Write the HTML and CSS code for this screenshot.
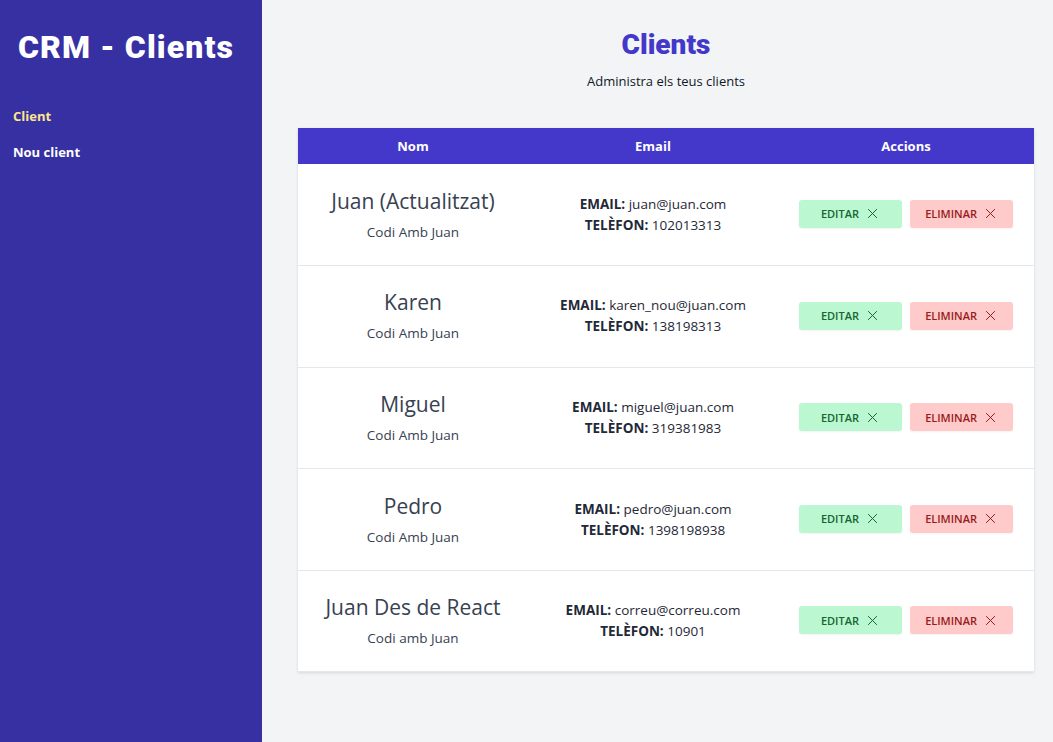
FILE: index.html
```html
<!DOCTYPE html>
<html lang="ca">
<head>
  <meta charset="UTF-8">
  <meta name="viewport" content="width=device-width, initial-scale=1.0">
  <title>CRM - Clients</title>
  <link rel="stylesheet" href="styles.css">
</head>
<body>
  <div class="layout">
    <aside class="sidebar">
      <h2 class="brand">CRM - Clients</h2>
      <nav class="nav">
        <a class="nav-link active" href="#">Client</a>
        <a class="nav-link" href="#">Nou client</a>
      </nav>
    </aside>

    <main class="main">
      <h1 class="title">Clients</h1>
      <p class="subtitle">Administra els teus clients</p>

      <table class="clients">
        <thead>
          <tr>
            <th>Nom</th>
            <th>Email</th>
            <th>Accions</th>
          </tr>
        </thead>
        <tbody>
          <tr>
            <td class="cell-name">
              <p class="name">Juan (Actualitzat)</p>
              <p class="company">Codi Amb Juan</p>
            </td>
            <td class="cell-contact">
              <p><span class="label">Email:</span> juan@juan.com</p>
              <p><span class="label">Telèfon:</span> 102013313</p>
            </td>
            <td class="cell-actions">
              <button class="btn btn-edit">Editar <svg viewBox="0 0 24 24"><path d="M5 5l14 14M19 5L5 19"/></svg></button>
              <button class="btn btn-delete">Eliminar <svg viewBox="0 0 24 24"><path d="M5 5l14 14M19 5L5 19"/></svg></button>
            </td>
          </tr>
          <tr>
            <td class="cell-name">
              <p class="name">Karen</p>
              <p class="company">Codi Amb Juan</p>
            </td>
            <td class="cell-contact">
              <p><span class="label">Email:</span> karen_nou@juan.com</p>
              <p><span class="label">Telèfon:</span> 138198313</p>
            </td>
            <td class="cell-actions">
              <button class="btn btn-edit">Editar <svg viewBox="0 0 24 24"><path d="M5 5l14 14M19 5L5 19"/></svg></button>
              <button class="btn btn-delete">Eliminar <svg viewBox="0 0 24 24"><path d="M5 5l14 14M19 5L5 19"/></svg></button>
            </td>
          </tr>
          <tr>
            <td class="cell-name">
              <p class="name">Miguel</p>
              <p class="company">Codi Amb Juan</p>
            </td>
            <td class="cell-contact">
              <p><span class="label">Email:</span> miguel@juan.com</p>
              <p><span class="label">Telèfon:</span> 319381983</p>
            </td>
            <td class="cell-actions">
              <button class="btn btn-edit">Editar <svg viewBox="0 0 24 24"><path d="M5 5l14 14M19 5L5 19"/></svg></button>
              <button class="btn btn-delete">Eliminar <svg viewBox="0 0 24 24"><path d="M5 5l14 14M19 5L5 19"/></svg></button>
            </td>
          </tr>
          <tr>
            <td class="cell-name">
              <p class="name">Pedro</p>
              <p class="company">Codi Amb Juan</p>
            </td>
            <td class="cell-contact">
              <p><span class="label">Email:</span> pedro@juan.com</p>
              <p><span class="label">Telèfon:</span> 1398198938</p>
            </td>
            <td class="cell-actions">
              <button class="btn btn-edit">Editar <svg viewBox="0 0 24 24"><path d="M5 5l14 14M19 5L5 19"/></svg></button>
              <button class="btn btn-delete">Eliminar <svg viewBox="0 0 24 24"><path d="M5 5l14 14M19 5L5 19"/></svg></button>
            </td>
          </tr>
          <tr>
            <td class="cell-name">
              <p class="name">Juan Des de React</p>
              <p class="company">Codi amb Juan</p>
            </td>
            <td class="cell-contact">
              <p><span class="label">Email:</span> correu@correu.com</p>
              <p><span class="label">Telèfon:</span> 10901</p>
            </td>
            <td class="cell-actions">
              <button class="btn btn-edit">Editar <svg viewBox="0 0 24 24"><path d="M5 5l14 14M19 5L5 19"/></svg></button>
              <button class="btn btn-delete">Eliminar <svg viewBox="0 0 24 24"><path d="M5 5l14 14M19 5L5 19"/></svg></button>
            </td>
          </tr>
        </tbody>
      </table>
    </main>
  </div>
</body>
</html>
```

FILE: styles.css
```css
* {
  margin: 0;
  padding: 0;
  box-sizing: border-box;
}

body {
  font-family: "Open Sans", "Noto Sans", sans-serif;
  background-color: #f3f4f6;
  color: #1f2937;
}

.layout {
  display: flex;
  min-height: 100vh;
}

/* barra lateral */
.sidebar {
  width: 262px;
  flex-shrink: 0;
  background-color: #3730a3;
  padding: 28px 13px;
}

.brand {
  font-family: Roboto, "Noto Sans", sans-serif;
  font-weight: 900;
  font-size: 32px;
  color: #ffffff;
  padding-left: 5px;
  letter-spacing: 1.1px;
}

.nav {
  display: flex;
  flex-direction: column;
  gap: 18px;
  margin-top: 41px;
}

.nav-link {
  font-size: 13px;
  font-weight: 700;
  color: #ffffff;
  text-decoration: none;
}

.nav-link.active {
  color: #fde68a;
}

/* contingut */
.main {
  flex: 1;
  padding: 28px 19px 40px 36px;
}

.title {
  font-family: Roboto, "Noto Sans", sans-serif;
  font-weight: 900;
  font-size: 28px;
  color: #4338ca;
  text-align: center;
  line-height: 34px;
}

.subtitle {
  font-size: 13px;
  text-align: center;
  margin-top: 10px;
  color: #111827;
}

.clients {
  width: 100%;
  margin-top: 38px;
  border-collapse: collapse;
  background-color: #ffffff;
  box-shadow: 0 1px 3px rgba(0, 0, 0, 0.12);
}

.clients thead {
  background-color: #4338ca;
}

.clients th {
  color: #ffffff;
  font-size: 13px;
  font-weight: 700;
  height: 36px;
}

.clients th:nth-child(1) { width: 230px; }
.clients th:nth-child(2) { width: 250px; }

.clients td {
  border-bottom: 1px solid #e5e7eb;
  height: 101.6px;
  text-align: center;
  vertical-align: middle;
}

.name {
  font-size: 21px;
  font-weight: 400;
  color: #374151;
  line-height: 24px;
}

.company {
  font-size: 13.5px;
  color: #374151;
  margin-top: 10px;
}

.cell-contact p {
  font-size: 13.5px;
  line-height: 21px;
  color: #1f2937;
}

.label {
  font-weight: 700;
  text-transform: uppercase;
}

.cell-actions {
  white-space: nowrap;
}

.btn {
  display: inline-flex;
  align-items: center;
  justify-content: center;
  gap: 6px;
  width: 103px;
  height: 28px;
  margin-top: -2px;
  border: none;
  border-radius: 3px;
  font-family: inherit;
  font-size: 11px;
  font-weight: 600;
  text-transform: uppercase;
  cursor: pointer;
  box-shadow: 0 1px 2px rgba(0, 0, 0, 0.05);
}

.btn + .btn {
  margin-left: 4px;
}

.btn svg {
  width: 15px;
  height: 15px;
  fill: none;
  stroke: currentColor;
  stroke-width: 1.6;
}

.btn-edit {
  background-color: #bbf7d0;
  color: #166534;
}

.btn-delete {
  background-color: #fecaca;
  color: #991b1b;
}
```
